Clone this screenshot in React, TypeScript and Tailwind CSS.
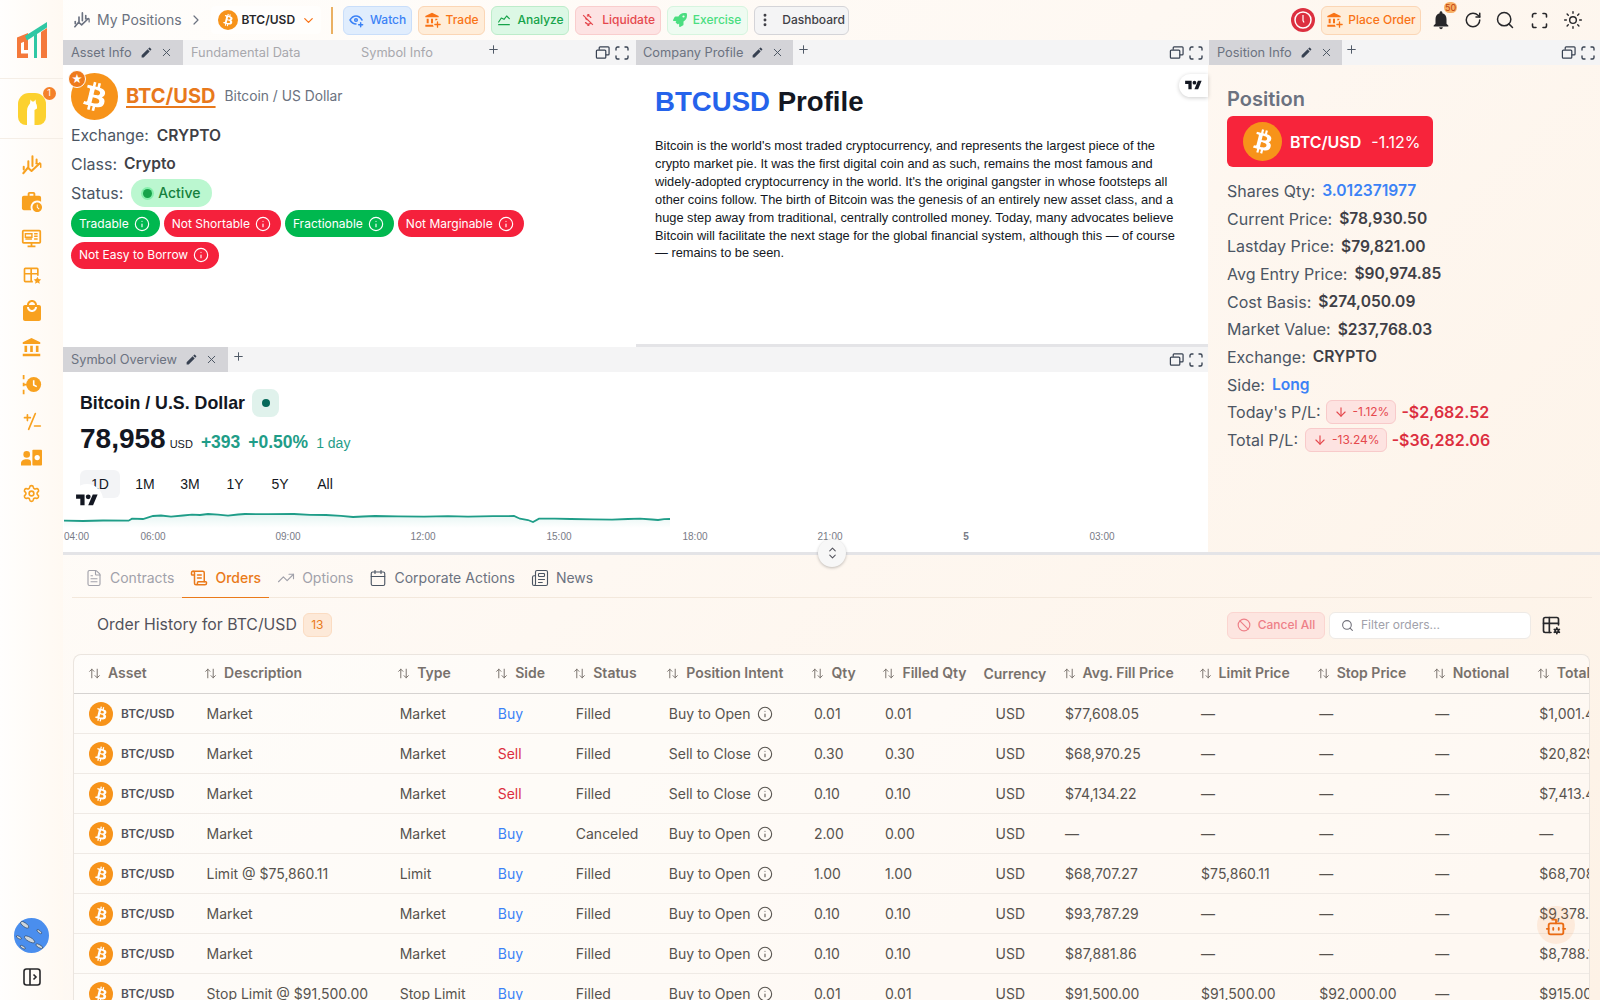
import React from "react";
import { ArrowDown, ArrowUpDown, Ban, Bot, Calendar, ChevronDown, ChevronRight, ChevronUp, EllipsisVertical, FileText, Info, Newspaper, Plus, RotateCw, ScrollText, Search, Settings, Sun, TrendingUp, X } from "lucide-react";
import { MdAccountBalance, MdEdit, MdLocalMall, MdMoneyOff, MdNotifications, MdWorkHistory } from "react-icons/md";
import { TbChartLine, TbEyePlus, TbMaximize, TbTableOptions } from "react-icons/tb";
import { FaRocket } from "react-icons/fa";

const BTC_PATH = "M23.189 14.02c.314-2.096-1.283-3.223-3.465-3.975l.708-2.84-1.728-.43-.69 2.765c-.454-.114-.92-.22-1.385-.326l.695-2.783L15.596 6l-.708 2.839c-.376-.086-.746-.17-1.104-.26l.002-.009-2.384-.595-.46 1.846s1.283.294 1.256.312c.7.175.826.638.805 1.006l-.806 3.235c.048.012.11.03.18.057l-.183-.045-1.13 4.532c-.086.212-.303.531-.793.41.018.025-1.256-.313-1.256-.313l-.858 1.978 2.25.561c.418.105.828.215 1.231.318l-.715 2.872 1.727.43.708-2.84c.472.127.93.245 1.378.357l-.706 2.828 1.728.43.715-2.866c2.948.558 5.164.333 6.097-2.333.752-2.146-.037-3.385-1.588-4.192 1.13-.26 1.98-1.003 2.207-2.538zm-3.95 5.538c-.533 2.147-4.148.986-5.32.695l.95-3.805c1.172.293 4.929.872 4.37 3.11zm.535-5.569c-.487 1.953-3.495.96-4.47.717l.86-3.45c.975.243 4.118.696 3.61 2.733z";

function Coin({ className }: { className: string }) {
  return (
    <svg viewBox="0 0 32 32" className={className}>
      <circle cx="16" cy="16" r="16" fill="#f7931a" />
      <path d={BTC_PATH} fill="#fff" />
    </svg>
  );
}

function ChartIcon({ className }: { className: string }) {
  return (
    <svg viewBox="0 0 24 24" fill="none" stroke="currentColor" strokeWidth="2.2" strokeLinecap="round" strokeLinejoin="round" className={className}>
      <path d="M8 15V8M12.5 13V2.5M17 10V6" />
      <path d="M2.5 21l5-6 4 3.5 9-8.5" />
      <path d="M16.5 10.5h5v4" strokeWidth="1.6" />
      <path d="M3 14v3" />
    </svg>
  );
}

function MonitorIcon({ className }: { className: string }) {
  return (
    <svg viewBox="0 0 24 24" className={className} fill="none" stroke="currentColor" strokeWidth="2">
      <rect x="2" y="3" width="20" height="14" rx="1" />
      <path d="M12 17v3M7.5 21h9" />
      <path d="M5 6.5h7.5v4H5zM5 12.5h7.5M15 6.5h4M15 9.5h4M15 12.5h4" strokeWidth="1.6" />
    </svg>
  );
}

function TableStarIcon({ className }: { className: string }) {
  return (
    <svg viewBox="0 0 24 24" className={className} fill="none" stroke="currentColor" strokeWidth="2">
      <path d="M13 20H4a1 1 0 0 1-1-1V5a1 1 0 0 1 1-1h14a1 1 0 0 1 1 1v8M3 10.5h16M11 4v16" />
      <path fill="currentColor" stroke="none" d="M18.5 14l1.4 2.9 3.1.4-2.3 2.2.6 3.1-2.8-1.5-2.8 1.5.6-3.1-2.3-2.2 3.1-.4z" />
    </svg>
  );
}

function TimelineClockIcon({ className }: { className: string }) {
  return (
    <svg viewBox="0 0 24 24" className={className}>
      <path d="M3 1v5M3 10v4M3 18v5M3 12h4" fill="none" stroke="currentColor" strokeWidth="2" />
      <circle cx="14.5" cy="12" r="8.5" fill="currentColor" />
      <path d="M14.5 7v5.5l3.5 2" fill="none" stroke="#fff" strokeWidth="1.8" />
    </svg>
  );
}

function PlusMinusIcon({ className }: { className: string }) {
  return (
    <svg viewBox="0 0 24 24" className={className} fill="none" stroke="currentColor" strokeWidth="2" strokeLinecap="round">
      <path d="M3 8h7M6.5 4.5v7M16 3L8 22M15 18h7" />
    </svg>
  );
}

function PersonMoneyIcon({ className }: { className: string }) {
  return (
    <svg viewBox="0 0 24 24" className={className}>
      <circle cx="6.5" cy="8.5" r="3.8" fill="currentColor" />
      <path d="M0 21v-2.5c0-3 3-4.5 6.5-4.5s5 1 5 4.5V21z" fill="currentColor" />
      <rect x="13" y="3" width="11" height="18" rx="1" fill="currentColor" />
      <circle cx="18.5" cy="12" r="3" fill="#fff" />
    </svg>
  );
}

function RestoreIcon() {
  return (
    <svg viewBox="0 0 16 16" className="h-[15px] w-[15px]" fill="none" stroke="#374151" strokeWidth="1.3">
      <rect x="1.5" y="5.5" width="10" height="8.5" rx="1" />
      <path d="M4.5 5V3a1 1 0 0 1 1-1H14a1 1 0 0 1 1 1v6.5a1 1 0 0 1-1 1h-2.5" />
    </svg>
  );
}

function TvLogo({ className }: { className: string }) {
  return (
    <svg viewBox="0 0 36 28" className={className} fill="#131722">
      <path d="M14 22H7V11H0V4h14v18zM28 22h-8l7.5-18h8L28 22z" />
      <circle cx="20" cy="8" r="4" />
    </svg>
  );
}

function BankPlus({ className }: { className: string }) {
  return (
    <span className={"relative inline-flex " + className}>
      <MdAccountBalance className="h-full w-full" />
      <Plus className="absolute -bottom-[1px] -right-[2px] h-[9px] w-[9px] rounded-full bg-[#ffedd5]" strokeWidth={3.5} />
    </span>
  );
}

function TopButton({ icon, label, className }: { icon: React.ReactNode; label: string; className: string }) {
  return (
    <div className={"flex h-[29px] items-center justify-center gap-[6px] rounded-md border text-xs font-medium " + className}>
      {icon}
      <span>{label}</span>
    </div>
  );
}

function TabBar({ active, rest, activeClass, plusClass, iconsClass }: { active: string; rest?: { label: string; className: string }[]; activeClass: string; plusClass: string; iconsClass?: string }) {
  return (
    <div className="flex h-[25px] shrink-0 items-stretch bg-[#f4f4f5] text-[12.8px]">
      <div className={"flex items-center bg-[#d4d4d8] pl-2 text-[#6b7280] " + activeClass}>
        <span>{active}</span>
        <MdEdit className="ml-[8px] h-[13px] w-[13px] text-[#374151]" />
        <X className="ml-[7px] h-[13px] w-[13px] text-[#4b5563]" strokeWidth={1.8} />
      </div>
      {rest?.map((t) => (
        <div key={t.label} className={"flex items-center whitespace-nowrap text-[#a8a8ad] " + t.className}>{t.label}</div>
      ))}
      <Plus className={"mt-[3px] h-[13px] w-[13px] text-[#4b5563] " + plusClass} strokeWidth={1.8} />
      <div className={"ml-auto flex items-center gap-[3.5px] " + (iconsClass ?? "pr-[3px]")}>
        <RestoreIcon />
        <TbMaximize className="h-[18px] w-[18px] text-[#374151]" strokeWidth={1.8} />
      </div>
    </div>
  );
}

function Pill({ label, good }: { label: string; good: boolean }) {
  return (
    <div className={"flex h-[27px] items-center gap-[5px] rounded-full pl-2 pr-[10px] text-xs text-white " + (good ? "bg-[#00b84f]" : "bg-[#f5213c]")}>
      <span>{label}</span>
      <Info className="h-4 w-4" strokeWidth={1.7} />
    </div>
  );
}

function Stat({ label, value, valueClass }: { label: string; value: string; valueClass?: string }) {
  return (
    <div className="flex h-[27.7px] items-center gap-[7px] text-base text-[#4b5563]">
      <span>{label}</span>
      <span className={"text-[15.6px] font-semibold " + (valueClass ?? "text-[#3f3f46]")}>{value}</span>
    </div>
  );
}

function Pl({ label, pct, value, pillClass }: { label: string; pct: string; value: string; pillClass: string }) {
  return (
    <div className="flex h-[27.7px] items-center text-base text-[#4b5563]">
      <span>{label}</span>
      <span className={"flex h-6 items-center gap-[5px] rounded-md border border-[#f8caca] bg-[#fde3e1] pl-[7px] pr-[6px] text-xs text-[#e5484d] " + pillClass}>
        <ArrowDown className="h-[14px] w-[14px]" strokeWidth={2} />
        {pct}
      </span>
      <span className="ml-[5px] text-base font-semibold text-[#dc2f3f]">{value}</span>
    </div>
  );
}

const chartPts = "1,22.7 20,23 40,22.5 65.6,22.7 69,20.7 80,21 90,18 98,17.5 108,18.7 120,17.5 129,16.7 137,17 145,16 155,16.6 165,17.7 175,16.5 182,16 205,16.2 231,16 247,16.8 263,17 278,17.8 290,19 300,18.5 312,18 335,18.4 361,18.7 385,18.2 405,18.6 430,18.2 451,18 457,20.7 465,22 470,24 476,20.7 492,20.6 508,21 530,21.3 549,21.7 565,21 577,20.7 589,21.5 595,22 601,21.2 607,21";

const sidebarIcons = [
  <ChartIcon className="h-[22px] w-[22px]" />,
  <MdWorkHistory className="h-[23px] w-[23px]" />,
  <MonitorIcon className="h-[21px] w-[21px]" />,
  <TableStarIcon className="h-5 w-5" />,
  <MdLocalMall className="h-6 w-6" />,
  <MdAccountBalance className="h-[21px] w-[21px]" />,
  <TimelineClockIcon className="h-[21px] w-[21px]" />,
  <PlusMinusIcon className="h-5 w-5" />,
  <PersonMoneyIcon className="h-[21px] w-[21px]" />,
  <Settings className="h-[19px] w-[19px]" strokeWidth={2} />,
];

type Row = { desc: string; type: string; side: string; status: string; intent: string; qty: string; filled: string; avg: string; limit: string; stop: string; total: string };
const rows: Row[] = [
  { desc: "Market", type: "Market", side: "Buy", status: "Filled", intent: "Buy to Open", qty: "0.01", filled: "0.01", avg: "$77,608.05", limit: "—", stop: "—", total: "$1,001.40" },
  { desc: "Market", type: "Market", side: "Sell", status: "Filled", intent: "Sell to Close", qty: "0.30", filled: "0.30", avg: "$68,970.25", limit: "—", stop: "—", total: "$20,829.00" },
  { desc: "Market", type: "Market", side: "Sell", status: "Filled", intent: "Sell to Close", qty: "0.10", filled: "0.10", avg: "$74,134.22", limit: "—", stop: "—", total: "$7,413.40" },
  { desc: "Market", type: "Market", side: "Buy", status: "Canceled", intent: "Buy to Open", qty: "2.00", filled: "0.00", avg: "—", limit: "—", stop: "—", total: "—" },
  { desc: "Limit @ $75,860.11", type: "Limit", side: "Buy", status: "Filled", intent: "Buy to Open", qty: "1.00", filled: "1.00", avg: "$68,707.27", limit: "$75,860.11", stop: "—", total: "$68,708.00" },
  { desc: "Market", type: "Market", side: "Buy", status: "Filled", intent: "Buy to Open", qty: "0.10", filled: "0.10", avg: "$93,787.29", limit: "—", stop: "—", total: "$9,378.70" },
  { desc: "Market", type: "Market", side: "Buy", status: "Filled", intent: "Buy to Open", qty: "0.10", filled: "0.10", avg: "$87,881.86", limit: "—", stop: "—", total: "$8,788.10" },
  { desc: "Stop Limit @ $91,500.00", type: "Stop Limit", side: "Buy", status: "Filled", intent: "Buy to Open", qty: "0.01", filled: "0.01", avg: "$91,500.00", limit: "$91,500.00", stop: "$92,000.00", total: "$915.00" },
];

const headers: { label: string; sort: boolean }[] = [
  { label: "Asset", sort: true }, { label: "Description", sort: true }, { label: "Type", sort: true }, { label: "Side", sort: true },
  { label: "Status", sort: true }, { label: "Position Intent", sort: true }, { label: "Qty", sort: true }, { label: "Filled Qty", sort: true },
  { label: "Currency", sort: false }, { label: "Avg. Fill Price", sort: true }, { label: "Limit Price", sort: true }, { label: "Stop Price", sort: true },
  { label: "Notional", sort: true }, { label: "Total", sort: true },
];

const td = "whitespace-nowrap pl-[15.5px]";
const tabItem = "flex items-center gap-[7px] px-2 pb-[3px]";

export default function App() {
  return (
    <div className="relative flex h-screen w-full overflow-hidden bg-[linear-gradient(135deg,#fffefc_0%,#fef8f2_45%,#fdf2e6_100%)] font-['Inter',sans-serif] text-[#374151]">
      {/* Sidebar */}
      <aside className="flex w-[63px] shrink-0 flex-col items-center bg-[linear-gradient(90deg,#fffefd,#fff9f2)]">
        <div className="flex h-[79px] w-full items-end justify-center border-b border-[#f5eee6] pb-[20px]">
          <svg viewBox="0 0 30 36" className="h-9 w-[30px]">
            <path d="M0 15.5L11 11v25H0z" fill="#f4793b" />
            <path d="M4 31.500V21l3-1.200v8.200h4v3.500z" fill="#fff" />
            <path d="M17 36V13.500l3-2V36z" fill="#2fc7a4" />
            <path d="M24 36V10l6-4v30z" fill="#f4793b" />
            <path d="M8 14L30 0v5.500L10 18.500z" fill="#2fc7a4" />
          </svg>
        </div>
        <div className="flex h-[60px] w-full items-center justify-center border-b border-[#f5eee6]">
          <div className="relative h-8 w-7 rounded-b-lg rounded-t-[11px] bg-[#fcd12f]">
            <svg viewBox="0 0 28 32" className="h-8 w-7 overflow-hidden rounded-b-lg">
              <path d="M9 32V18c0-4 2-6 3-7.500l.5-4 1.500 2h2l1.500-2 .5 4c1 1 1 3 1 5l-2.500 1.500V32z" fill="#fff" />
            </svg>
            <span className="absolute -right-[10px] -top-[6px] flex h-[13px] w-[13px] items-center justify-center rounded-full bg-[#f4812a] text-[9px] text-white">1</span>
          </div>
        </div>
        <div className="mt-[8px] flex flex-col items-center text-[#f8a11f]">
          {sidebarIcons.map((icon, i) => (
            <div key={i} className="flex h-[36.500px] w-full items-center justify-center">{icon}</div>
          ))}
        </div>
        <div className="mt-auto flex flex-col items-center pb-[14px]">
          <svg viewBox="0 0 36 36" className="h-[35px] w-[35px]">
            <circle cx="18" cy="18" r="18" fill="#4a8eee" />
            <g fill="#cfd6dc" stroke="#26405f" strokeWidth="0.6">
              <ellipse cx="11" cy="7" rx="5" ry="2" transform="rotate(35 11 7)" />
              <ellipse cx="16" cy="22" rx="6" ry="2.200" transform="rotate(30 16 22)" />
              <ellipse cx="26" cy="14" rx="3" ry="1.200" transform="rotate(40 26 14)" />
              <ellipse cx="5" cy="20" rx="3" ry="1.200" transform="rotate(30 5 20)" />
              <ellipse cx="26" cy="29" rx="4" ry="1.500" transform="rotate(30 26 29)" />
              <ellipse cx="9" cy="30" rx="3" ry="1.200" transform="rotate(30 9 30)" />
            </g>
          </svg>
          <svg viewBox="0 0 18 18" className="mt-[15px] h-[18px] w-[18px]" fill="none" stroke="#27272a" strokeWidth="1.6">
            <rect x="1" y="1" width="16" height="16" rx="2.500" />
            <path d="M7 1v16M10.500 6.500L13 9l-2.500 2.500" />
          </svg>
        </div>
      </aside>

      <main className="flex min-w-0 flex-1 flex-col">
        {/* Top bar */}
        <header className="flex h-10 shrink-0 items-center pl-[10px]">
          <ChartIcon className="h-[18px] w-[18px] text-[#6b7280]" />
          <span className="ml-[6px] text-sm text-[#6b7280]">My Positions</span>
          <ChevronRight className="ml-[6px] h-4 w-4 text-[#6b7280]" strokeWidth={1.8} />
          <div className="ml-[7px] flex h-[28px] w-[110px] items-center rounded bg-white/50 pl-[7px]">
            <Coin className="h-[20px] w-[20px]" />
            <span className="ml-[4px] text-xs font-semibold text-[#27272a]">BTC/USD</span>
            <ChevronDown className="ml-[6px] h-[15px] w-[15px] text-[#f97316]" strokeWidth={2} />
          </div>
          <div className="ml-[10px] h-[27px] w-[2px] bg-[#eab063]" />
          <div className="ml-[10px] flex gap-[6px]">
            <TopButton className="w-[69px] border-[#c9defa] bg-[#e0edfd] text-[#3b82f6]" label="Watch" icon={<TbEyePlus className="h-4 w-4" strokeWidth={2.2} />} />
            <TopButton className="w-[67px] border-[#fbd6b5] bg-[#ffedd9] text-[#f97316]" label="Trade" icon={<BankPlus className="h-4 w-4" />} />
            <TopButton className="w-[78px] border-[#bdecca] bg-[#dcf8e5] text-[#16a34a]" label="Analyze" icon={<TbChartLine className="h-4 w-4" strokeWidth={1.8} />} />
            <TopButton className="w-[86px] border-[#f9cdcd] bg-[#fde3e3] text-[#e5484d]" label="Liquidate" icon={<MdMoneyOff className="h-4 w-4" />} />
            <TopButton className="w-[81px] border-[#d6f5df] bg-[#eefbf1] text-[#4ade80]" label="Exercise" icon={<FaRocket className="h-[14px] w-[14px]" />} />
            <TopButton className="w-[95px] border-[#d4d4d8] bg-[#f4f4f5] text-[#3f3f46]" label="Dashboard" icon={<EllipsisVertical className="mr-[3px] h-4 w-4" strokeWidth={2.4} />} />
          </div>
          <div className="ml-auto flex items-center pr-[10px]">
            <svg viewBox="0 0 24 24" className="h-6 w-6">
              <circle cx="12" cy="12" r="12" fill="#dc2f3f" />
              <circle cx="12" cy="12" r="8" fill="none" stroke="#fff" strokeWidth="1.500" />
              <path d="M12 7v5.500l1 2" fill="none" stroke="#fff" strokeWidth="1.200" />
            </svg>
            <div className="ml-[6px]">
              <TopButton className="w-[100px] border-[#fbd6b5] bg-[#ffedd9] text-[#f97316]" label="Place Order" icon={<BankPlus className="h-4 w-4" />} />
            </div>
            <div className="relative ml-[3px] flex w-[34px] justify-center">
              <MdNotifications className="h-[22px] w-[22px] text-[#27272a]" />
              <span className="absolute -top-[7px] left-[20px] flex h-[11px] items-center rounded-full bg-[#f59e42]/80 px-[1px] text-[9px] text-[#c2410c]">50</span>
            </div>
            <div className="flex w-[30px] justify-center"><RotateCw className="h-[18px] w-[18px] text-[#27272a]" strokeWidth={2} /></div>
            <div className="flex w-[34px] justify-center"><Search className="h-5 w-5 text-[#27272a]" strokeWidth={1.8} /></div>
            <div className="flex w-[34px] justify-center"><TbMaximize className="h-[21px] w-[21px] text-[#27272a]" strokeWidth={1.8} /></div>
            <div className="flex w-[34px] justify-center"><Sun className="h-5 w-5 text-[#27272a]" strokeWidth={1.7} /></div>
          </div>
        </header>

        {/* Upper panels */}
        <section className="flex h-[515px] shrink-0 border-b-[3px] border-[#e4e4e7]">
          <div className="flex w-[1145px] shrink-0 flex-col bg-white">
            <div className="flex h-[307px] shrink-0">
              <div className="flex w-[573px] shrink-0 flex-col">
                <TabBar
                  active="Asset Info"
                  activeClass="w-[120px]"
                  rest={[
                    { label: "Fundamental Data", className: "ml-2 w-[170px]" },
                    { label: "Symbol Info", className: "w-[71px]" },
                  ]}
                  plusClass="ml-[55px]"
                  iconsClass="pr-[5px]"
                />
                <div className="px-2 pt-2">
                  <div className="flex items-center">
                    <div className="relative">
                      <Coin className="h-[47px] w-[47px]" />
                      <span className="absolute -left-[3px] -top-[3px] flex h-[18px] w-[18px] items-center justify-center rounded-full border border-white bg-[#ee7a1c] text-[11px] leading-none text-white">★</span>
                    </div>
                    <span className="-mt-[1px] ml-2 text-xl font-bold text-[#e8791c] underline decoration-2 underline-offset-[3px]">BTC/USD</span>
                    <span className="-mt-[1px] ml-[9px] text-[13.8px] text-[#6b7280]">Bitcoin / US Dollar</span>
                  </div>
                  <div className="mt-[2px] flex h-7 items-center gap-[8px] text-base text-[#4b5563]"><span className="text-[15.8px]">Exchange:</span><span className="text-[15.6px] font-semibold text-[#3f3f46]">CRYPTO</span></div>
                  <div className="flex h-7 items-center gap-[7px] text-base text-[#4b5563]"><span>Class:</span><span className="text-[15.6px] font-semibold text-[#3f3f46]">Crypto</span></div>
                  <div className="mt-[1px] flex h-7 items-center gap-2 text-base text-[#4b5563]">
                    <span>Status:</span>
                    <span className="flex h-7 w-[81px] items-center justify-center gap-[6px] rounded-full bg-[#bbf7d0] text-sm font-medium text-[#15803d]">
                      <span className="h-[9px] w-[9px] rounded-full bg-[#16a34a] shadow-[0_0_0_2px_#86efac]" />
                      Active
                    </span>
                  </div>
                  <div className="mt-[3px] flex flex-wrap gap-x-[4px] gap-y-[4.500px]">
                    <Pill label="Tradable" good />
                    <Pill label="Not Shortable" good={false} />
                    <Pill label="Fractionable" good />
                    <Pill label="Not Marginable" good={false} />
                    <Pill label="Not Easy to Borrow" good={false} />
                  </div>
                </div>
              </div>
              <div className="flex min-w-0 flex-1 flex-col border-b-[3px] border-[#e4e4e7]">
                <TabBar active="Company Profile" activeClass="w-[157px] pl-[7px]" plusClass="ml-[4px]" />
                <div className="relative pl-[19px] pr-[28px] pt-[22px] font-['Liberation_Sans',sans-serif]">
                  <h1 className="text-[27.6px] font-bold leading-[30px] text-[#131722]"><span className="text-[#2563eb]">BTCUSD</span> Profile</h1>
                  <p className="mt-[20px] text-[12.83px] leading-[17.900px] text-[#131722]">
                    Bitcoin is the world's most traded cryptocurrency, and represents the largest piece of the crypto market pie. It was the first digital coin and as such, remains the most famous and widely-adopted cryptocurrency in the world. It's the original gangster in whose footsteps all other coins follow. The birth of Bitcoin was the genesis of an entirely new asset class, and a huge step away from traditional, centrally controlled money. Today, many advocates believe Bitcoin will facilitate the next stage for the global financial system, although this — of course — remains to be seen.
                  </p>
                  <div className="absolute right-0 top-[9px] flex h-[23px] w-[29px] items-center justify-center rounded-l-xl bg-white shadow-[0_1px_4px_rgba(0,0,0,0.2)]">
                    <TvLogo className="h-[13px] w-[17px]" />
                  </div>
                </div>
              </div>
            </div>
            <div className="flex min-h-0 flex-1 flex-col">
              <TabBar active="Symbol Overview" activeClass="w-[165px]" plusClass="ml-[4px]" />
              <div className="relative flex min-h-0 flex-1 flex-col font-['Liberation_Sans',sans-serif]">
                <div className="pl-[17px] pt-[17px]">
                  <div className="flex h-7 items-center">
                    <span className="text-[17.8px] font-bold text-[#131722]">Bitcoin / U.S. Dollar</span>
                    <span className="ml-[7px] flex h-7 w-[27px] items-center justify-center rounded-lg bg-[#e0f2ec]"><span className="h-2 w-2 rounded-full bg-[#06695a]" /></span>
                  </div>
                  <div className="mt-1 flex h-9 items-baseline">
                    <span className="text-[28px] font-bold leading-9 text-[#131722]">78,958</span>
                    <span className="ml-[4px] text-[11px] text-[#131722]">USD</span>
                    <span className="ml-2 text-[17.5px] font-semibold text-[#1f9d88]">+393</span>
                    <span className="ml-2 text-[17.5px] font-semibold text-[#1f9d88]">+0.50%</span>
                    <span className="ml-2 text-sm text-[#1f9d88]">1 day</span>
                  </div>
                  <div className="mt-[13px] flex gap-[5px] text-sm text-[#131722]">
                    {["1D", "1M", "3M", "1Y", "5Y", "All"].map((r, i) => (
                      <div key={r} className={"flex h-7 w-10 items-center justify-center rounded-md " + (i === 0 ? "bg-[#f3f4f6]" : "")}>{r}</div>
                    ))}
                  </div>
                </div>
                <svg viewBox="0 0 1145 51" className="h-[51px] w-[1145px] shrink-0">
                  <defs>
                    <linearGradient id="fade" x1="0" y1="0" x2="0" y2="1">
                      <stop offset="0" stopColor="#22ab94" stopOpacity="0.12" />
                      <stop offset="1" stopColor="#22ab94" stopOpacity="0" />
                    </linearGradient>
                  </defs>
                  <polygon points={chartPts + " 607,30 1,30"} fill="url(#fade)" />
                  <polyline points={chartPts} fill="none" stroke="#1f9d88" strokeWidth="1.800" />
                  <g fontSize="10" fill="#787b86" fontFamily="'Liberation Sans',sans-serif" textAnchor="middle">
                    <text x="13.500" y="41.500">04:00</text>
                    <text x="90" y="41.500">06:00</text>
                    <text x="225" y="41.500">09:00</text>
                    <text x="360" y="41.500">12:00</text>
                    <text x="496" y="41.500">15:00</text>
                    <text x="632" y="41.500">18:00</text>
                    <text x="767" y="41.500">21:00</text>
                    <text x="903" y="41.500" fontWeight="700">5</text>
                    <text x="1039" y="41.500">03:00</text>
                  </g>
                </svg>
                <div className="absolute left-[8px] top-[112px] flex h-8 w-8 items-center justify-center rounded-full bg-white">
                  <TvLogo className="h-[17px] w-[22px]" />
                </div>
              </div>
            </div>
          </div>
          <div className="flex min-w-0 flex-1 flex-col">
            <TabBar active="Position Info" activeClass="w-[133px] ml-[1px]" plusClass="ml-[3px]" />
            <div className="pl-[19px] pt-5">
              <h2 className="h-7 text-xl font-semibold leading-7 text-[#6b7280]">Position</h2>
              <div className="mt-[3px] flex h-[51px] w-[206px] items-center rounded-md bg-[#f7243b] pl-4 text-white">
                <Coin className="h-[39px] w-[39px]" />
                <span className="ml-2 text-base font-semibold">BTC/USD</span>
                <span className="ml-[10px] text-base">-1.12%</span>
              </div>
              <div className="mt-[10px]">
                <Stat label="Shares Qty:" value="3.012371977" valueClass="text-[#3b82f6]" />
                <Stat label="Current Price:" value="$78,930.50" />
                <Stat label="Lastday Price:" value="$79,821.00" />
                <Stat label="Avg Entry Price:" value="$90,974.85" />
                <Stat label="Cost Basis:" value="$274,050.09" />
                <Stat label="Market Value:" value="$237,768.03" />
                <Stat label="Exchange:" value="CRYPTO" />
                <Stat label="Side:" value="Long" valueClass="text-[#3b82f6]" />
                <Pl label="Today's P/L:" pct="-1.12%" value="-$2,682.52" pillClass="ml-[5px]" />
                <Pl label="Total P/L:" pct="-13.24%" value="-$36,282.06" pillClass="ml-[7px]" />
              </div>
            </div>
          </div>
        </section>

        {/* Lower section */}
        <section className="flex min-h-0 flex-1 flex-col pl-[9px] pr-[8px] pt-[6px]">
          <div className="flex h-[37px] shrink-0 items-stretch border-b border-[#f3e8dc] pl-[5px] text-sm">
            <div className={tabItem + " text-[#a1a1aa]"}><FileText className="h-[18px] w-[18px]" strokeWidth={1.5} /><span>Contracts</span></div>
            <div className={tabItem + " -mb-px border-b border-[#ea7a1a] font-medium text-[#ea7a1a]"}><ScrollText className="h-[18px] w-[18px]" strokeWidth={2} /><span>Orders</span></div>
            <div className={tabItem + " text-[#a1a1aa]"}><TrendingUp className="h-[18px] w-[18px]" strokeWidth={1.5} /><span>Options</span></div>
            <div className={tabItem + " text-[#6b7280]"}><Calendar className="h-[18px] w-[18px] text-[#4b5563]" strokeWidth={1.5} /><span>Corporate Actions</span></div>
            <div className={tabItem + " text-[#6b7280]"}><Newspaper className="h-[18px] w-[18px] text-[#4b5563]" strokeWidth={1.5} /><span>News</span></div>
          </div>
          <div className="flex h-[55.500px] shrink-0 items-center pb-[1px] pl-[25px] pr-[31px]">
            <span className="text-[15.8px] text-[#52525b]">Order History for BTC/USD</span>
            <span className="ml-[6px] flex h-6 w-[29px] items-center justify-center rounded-md border border-[#fbdcc2] bg-[#fde9d8] text-xs text-[#ea7a1a]">13</span>
            <div className="ml-auto flex h-[27px] w-[98px] items-center justify-center gap-[7px] rounded-md border border-[#fbd5d0] bg-[#fde5e0] text-xs font-medium text-[#ee8088]">
              <Ban className="h-[14px] w-[14px]" strokeWidth={2} />
              Cancel All
            </div>
            <div className="ml-[4px] flex h-[27px] w-[202px] items-center gap-[7px] rounded-md border border-[#eeeae6] bg-white pl-[11px] text-xs text-[#a1a1aa]">
              <Search className="h-[13px] w-[13px] text-[#71717a]" strokeWidth={2} />
              Filter orders...
            </div>
            <TbTableOptions className="ml-[10px] h-[20px] w-[20px] text-[#27272a]" strokeWidth={2} />
          </div>
          <div className="ml-[1px] mr-[2px] min-h-0 flex-1 overflow-hidden rounded-t-lg border border-b-0 border-[#ebe5df] bg-white/45">
            <table className="w-[1570px] table-fixed border-collapse text-sm text-[#57534e]">
              <colgroup>
                <col className="w-[117px]" />
                <col className="w-[193px]" />
                <col className="w-[98px]" />
                <col className="w-[78px]" />
                <col className="w-[93px]" />
                <col className="w-[145px]" />
                <col className="w-[71px]" />
                <col className="w-[99px]" />
                <col className="w-[81px]" />
                <col className="w-[136px]" />
                <col className="w-[118px]" />
                <col className="w-[116px]" />
                <col className="w-[104px]" />
                <col className="w-[120px]" />
              </colgroup>
              <thead>
                <tr className="h-[39px] border-b border-[#d6d3d1]">
                  {headers.map((h, i) => (
                    <th key={h.label} className={"whitespace-nowrap text-left text-sm font-semibold text-[#78716c] " + (i === 0 ? "pl-[14px]" : h.sort ? "pl-[13px]" : "pl-[15px]")}>
                      <span className="inline-flex items-center gap-[7px]">
                        {h.sort && <ArrowUpDown className="h-[13px] w-[13px]" strokeWidth={1.8} />}
                        {h.label}
                      </span>
                    </th>
                  ))}
                </tr>
              </thead>
              <tbody>
                {rows.map((r, i) => (
                  <tr key={i} className="h-10 border-b border-[#efeae5]">
                    <td className="pl-[15px]">
                      <div className="flex items-center gap-2">
                        <Coin className="h-6 w-6" />
                        <span className="text-xs font-semibold text-[#52525b]">BTC/USD</span>
                      </div>
                    </td>
                    <td className={td}>{r.desc}</td>
                    <td className={td}>{r.type}</td>
                    <td className={td + (r.side === "Buy" ? " text-[#3b82f6]" : " text-[#dc2f3f]")}>{r.side}</td>
                    <td className={td}>{r.status}</td>
                    <td className={td}>
                      <span className="inline-flex items-center gap-[6px]">{r.intent}<Info className="h-4 w-4" strokeWidth={1.6} /></span>
                    </td>
                    <td className={td}>{r.qty}</td>
                    <td className={td}>{r.filled}</td>
                    <td className="whitespace-nowrap pl-[27px]">USD</td>
                    <td className={td}>{r.avg}</td>
                    <td className={td}>{r.limit}</td>
                    <td className={td}>{r.stop}</td>
                    <td className={td}>—</td>
                    <td className={td}>{r.total}</td>
                  </tr>
                ))}
              </tbody>
            </table>
          </div>
        </section>
      </main>

      {/* Overlays */}
      <div className="absolute left-[818px] top-[539px] flex h-7 w-7 flex-col items-center justify-center rounded-full bg-[#f7f7f7] shadow-[0_1px_3px_rgba(0,0,0,0.25)]">
        <ChevronUp className="-mb-[2px] h-[11px] w-[11px] text-[#52525b]" strokeWidth={2.2} />
        <ChevronDown className="-mt-[2px] h-[11px] w-[11px] text-[#52525b]" strokeWidth={2.2} />
      </div>
      <div className="absolute left-[1537px] top-[906px] flex h-[38px] w-[38px] items-center justify-center rounded-full bg-[#f97316]/10">
        <Bot className="mt-[3px] h-[22px] w-[22px] text-[#ea6a12]" strokeWidth={2} />
      </div>
    </div>
  );
}
